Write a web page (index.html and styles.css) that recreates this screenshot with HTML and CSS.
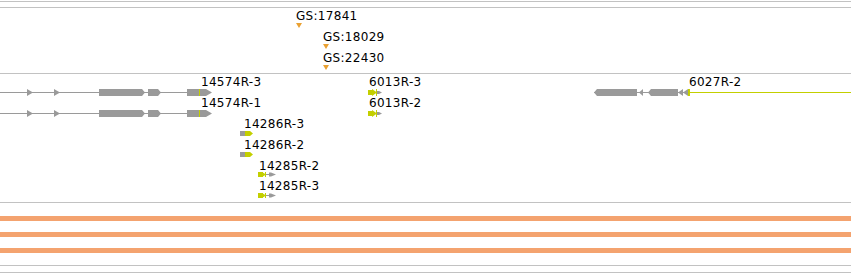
FILE: index.html
```html
<!DOCTYPE html>
<html lang="en">
<head>
    <meta charset="UTF-8">
    <title>Gene Browser Tracks</title>
    <link rel="stylesheet" href="styles.css">
</head>

<body>
    <div class="track track-top"></div>
    <div class="track track-ruler"></div>

    <!-- insertion markers -->
    <div class="track track-markers">
        <svg class="canvas" width="851" height="65">
            <text class="label" x="296" y="12">GS:17841</text>
            <polygon class="marker" points="296,15 302,15 299,20"/>
            <text class="label" x="323" y="33">GS:18029</text>
            <polygon class="marker" points="323,36 329,36 326,41"/>
            <text class="label" x="323" y="54">GS:22430</text>
            <polygon class="marker" points="323,57 329,57 326,62"/>
        </svg>
    </div>

    <!-- transcripts -->
    <div class="track track-genes">
        <svg class="canvas" width="851" height="128">
            <!-- 14574R-3 -->
            <text class="label" x="201" y="12">14574R-3</text>
            <rect class="intron" x="0" y="18" width="190" height="1"/>
            <polygon class="utr" points="27,15 33,18.5 27,22"/>
            <polygon class="utr" points="54,15 60,18.5 54,22"/>
            <polygon class="utr" points="99,15 142,15 145,18.5 142,22 99,22"/>
            <polygon class="utr" points="148,15 158,15 161,18.5 158,22 148,22"/>
            <polygon class="utr" points="187,15 206,15 212,18.5 206,22 187,22"/>
            <rect class="cds" x="199" y="15" width="1" height="7"/>

            <!-- 14574R-1 -->
            <text class="label" x="201" y="33">14574R-1</text>
            <rect class="intron" x="0" y="39" width="190" height="1"/>
            <polygon class="utr" points="27,36 33,39.5 27,43"/>
            <polygon class="utr" points="54,36 60,39.5 54,43"/>
            <polygon class="utr" points="99,36 142,36 145,39.5 142,43 99,43"/>
            <polygon class="utr" points="148,36 158,36 161,39.5 158,43 148,43"/>
            <polygon class="utr" points="187,36 206,36 212,39.5 206,43 187,43"/>
            <rect class="cds" x="199" y="36" width="1" height="7"/>

            <!-- 6013R-3 / 6013R-2 -->
            <text class="label" x="369" y="12">6013R-3</text>
            <rect class="cds" x="368" y="16" width="5" height="5"/>
            <polygon class="cds" points="372,15 377,18.5 372,22"/>
            <rect class="cds" x="376" y="15" width="1" height="7"/>
            <polygon class="utr" points="377,17 379,17 382,18.5 379,20 377,20"/>

            <text class="label" x="369" y="33">6013R-2</text>
            <rect class="cds" x="368" y="37" width="5" height="5"/>
            <polygon class="cds" points="372,36 377,39.5 372,43"/>
            <rect class="cds" x="376" y="36" width="1" height="7"/>
            <polygon class="utr" points="377,38 379,38 382,39.5 379,41 377,41"/>

            <!-- 14286R-3 / 14286R-2 -->
            <text class="label" x="244" y="54">14286R-3</text>
            <rect class="utr" x="240" y="57" width="5" height="5"/>
            <polygon class="cds" points="245,57 250,57 253,59.5 250,62 245,62"/>

            <text class="label" x="244" y="75">14286R-2</text>
            <rect class="utr" x="240" y="78" width="5" height="5"/>
            <polygon class="cds" points="245,78 250,78 253,80.5 250,83 245,83"/>

            <!-- 14285R-2 / 14285R-3 -->
            <text class="label" x="259" y="96">14285R-2</text>
            <rect class="cds" x="258" y="98" width="5" height="5"/>
            <polygon class="cds" points="262,98 266,100.5 262,103"/>
            <rect class="cds" x="265" y="98" width="1" height="5"/>
            <rect class="intron" x="266" y="100" width="5" height="1"/>
            <polygon class="utr" points="269,98.5 271,98.5 276,100.5 271,102.5 269,102.5"/>

            <text class="label" x="259" y="116">14285R-3</text>
            <rect class="cds" x="258" y="119" width="5" height="5"/>
            <polygon class="cds" points="262,119 266,121.5 262,124"/>
            <rect class="cds" x="265" y="119" width="1" height="5"/>
            <rect class="intron" x="266" y="121" width="5" height="1"/>
            <polygon class="utr" points="269,119.5 271,119.5 276,121.5 271,123.5 269,123.5"/>

            <!-- 6027R-2 -->
            <text class="label" x="689" y="12">6027R-2</text>
            <rect class="intron" x="594" y="18" width="95" height="1"/>
            <polygon class="utr" points="594,18.5 597,15 637,15 637,22 597,22"/>
            <polygon class="utr" points="639,18.5 643,15 643,22"/>
            <polygon class="utr" points="648,18.5 651,15 678,15 678,22 651,22"/>
            <polygon class="utr" points="678,18.5 683,15 683,22"/>
            <polygon class="utr" points="683,18.5 688,15 688,22"/>
            <rect class="cds" x="688" y="15" width="2" height="7"/>
            <rect class="cds" x="690" y="18" width="161" height="1"/>
        </svg>
    </div>

    <!-- coverage bars -->
    <div class="track track-bars">
        <div class="bar"></div>
        <div class="bar"></div>
        <div class="bar"></div>
    </div>

    <div class="track track-bottom"></div>
</body>

</html>
```
FILE: styles.css
```css
body {
    font-family: "DejaVu Sans", Verdana, sans-serif;
    margin: 0;
    padding: 0;
    background-color: white;
    width: 851px;
    overflow: hidden;
}

.track {
    border-bottom: 1px solid #c2c2c2;
}

.track-top {
    height: 1px;
}

.track-ruler {
    height: 5px;
}

.track-markers {
    height: 65px;
}

.track-genes {
    height: 128px;
}

.track-bars {
    height: 63px;
    padding-top: 13px;
    box-sizing: border-box;
    display: flex;
    flex-direction: column;
    gap: 11px;
}

.track-bottom {
    height: 6px;
}

.canvas {
    display: block;
}

.label {
    font-family: "DejaVu Sans", Verdana, sans-serif;
    font-size: 12px;
    letter-spacing: 0.3px;
    fill: #000;
}

.marker {
    fill: #eaa132;
}

.intron {
    fill: #9a9a9a;
}

.utr {
    fill: #9a9a9a;
}

.cds {
    fill: #c3cf00;
}

.bar {
    height: 5px;
    background-color: #f4a36f;
}
```
